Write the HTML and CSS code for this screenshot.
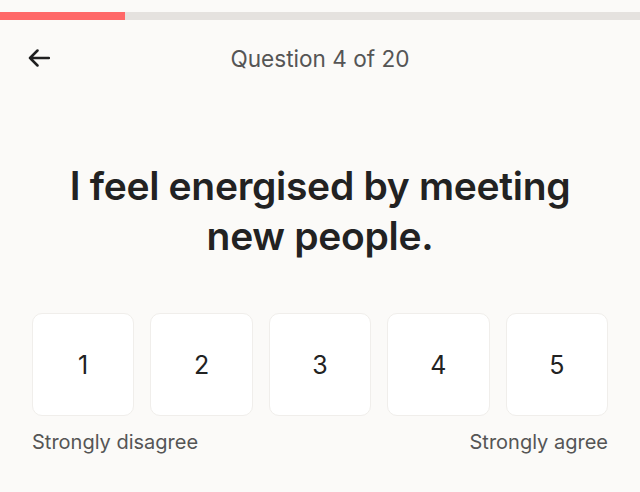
FILE: index.html
```html
<!DOCTYPE html>
<html lang="en">
<head>
<meta charset="utf-8">
<title>Question 4 of 20</title>
<link rel="stylesheet" href="styles.css">
</head>
<body>
<div class="page">
  <div class="progress"><div class="progress-fill" style="width: 19.5%"></div></div>
  <header class="topbar">
    <button class="back" aria-label="Back">
      <svg width="22" height="18" viewBox="0 0 22 18" fill="none" stroke="#1f1f1f" stroke-width="2.5" stroke-linecap="round" stroke-linejoin="round"><path d="M21 9H2M9.5 1.5L2 9l7.5 7.5"/></svg>
    </button>
    <div class="counter">Question 4 of 20</div>
    <div class="spacer"></div>
  </header>
  <main class="content">
    <h1 class="question">I feel energised by meeting new people.</h1>
    <div class="scale">
      <button class="option">1</button>
      <button class="option">2</button>
      <button class="option">3</button>
      <button class="option">4</button>
      <button class="option">5</button>
    </div>
    <div class="labels">
      <span>Strongly disagree</span>
      <span>Strongly agree</span>
    </div>
  </main>
</div>
</body>
</html>
```

FILE: styles.css
```css
* { box-sizing: border-box; }
html, body {
  margin: 0;
  padding: 0;
  background: #fbfaf8;
}
body {
  font-family: Inter, "Noto Sans", sans-serif;
  color: #222;
}
.page {
  width: 640px;
  height: 492px;
  padding-top: 12px;
}
.progress {
  height: 8px;
  background: #e5e2df;
}
.progress-fill {
  height: 100%;
  background: #ff6868;
}
.topbar {
  display: flex;
  align-items: center;
  justify-content: space-between;
  padding: 0 28px;
  height: 76px;
}
.back {
  width: 24px;
  height: 24px;
  padding: 0;
  border: none;
  background: none;
  display: flex;
  align-items: center;
  justify-content: flex-start;
}
.spacer { width: 24px; }
.counter {
  font-size: 22.6px;
  color: #555;
}
.content {
  padding: 0 32px;
}
.question {
  margin: 65px 0 0;
  text-align: center;
  font-size: 39px;
  font-weight: 600;
  line-height: 50px;
  color: #222;
  letter-spacing: -0.3px;
  padding: 0 20px;
}
.scale {
  margin-top: 52px;
  display: flex;
  gap: 16px;
}
.option {
  flex: 1;
  height: 103px;
  background: #fff;
  border: 1px solid #f0eeeb;
  border-radius: 10px;
  font-family: inherit;
  font-size: 25px;
  color: #222;
  padding: 0;
}
.labels {
  display: flex;
  justify-content: space-between;
  margin-top: 14px;
  font-size: 20px;
  color: #555;
}
```
